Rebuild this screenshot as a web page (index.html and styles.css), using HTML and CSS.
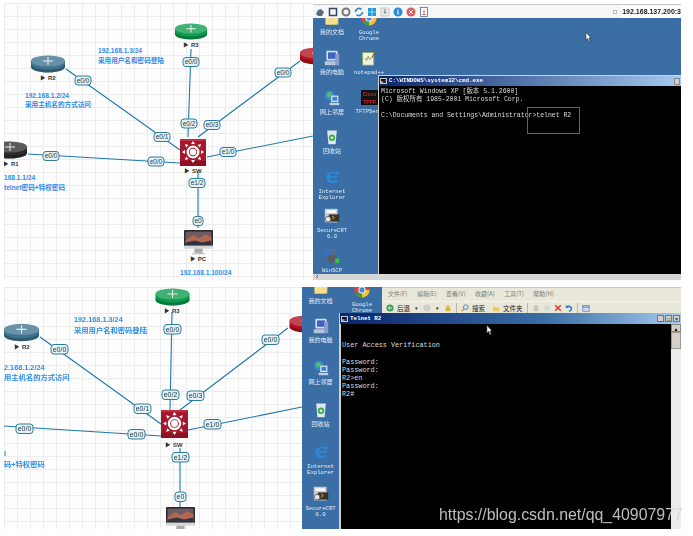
FILE: index.html
```html
<!DOCTYPE html>
<html lang="zh">
<head>
<meta charset="utf-8">
<title>Telnet 实验截图</title>
<link rel="stylesheet" href="styles.css">
</head>
<body>
<svg class="defs" width="0" height="0" aria-hidden="true">
  <defs>
    <symbol id="router" viewBox="0 0 36 18">
      <path d="M1 6v6c0 3 7.500 5.500 17 5.500s17-2.500 17-5.500V6z" fill="currentColor"/>
      <ellipse cx="18" cy="6" rx="17" ry="5.500" fill="currentColor"/>
      <ellipse cx="18" cy="6" rx="17" ry="5.500" fill="#fff" opacity=".22"/>
      <path d="M1 9c0 3 7.500 5.500 17 5.500S35 12 35 9v3c0 3-7.500 5.500-17 5.500S1 15 1 12z" fill="#000" opacity=".22"/>
      <path d="M18 2v8M13 6h10" stroke="#fff" stroke-width="1.100" opacity=".85"/>
    </symbol>
    <symbol id="switch" viewBox="0 0 26 27">
      <rect width="26" height="27" fill="#a3182c"/>
      <rect y="22" width="26" height="5" fill="#8d1023"/>
      <rect width="26" height="2" fill="#c42a3e"/>
      <circle cx="13" cy="13" r="6.500" fill="#fff"/>
      <circle cx="13" cy="13" r="4.200" fill="#a3182c"/>
      <circle cx="13" cy="13" r="3.300" fill="#fff"/>
      <path d="M13 2l2 3h-4zM13 24l2-3h-4zM2 13l3-2v4zM24 13l-3-2v4zM5 5l3.500 1-2.500 2.500zM21 5l-3.500 1 2.500 2.500zM5 21l3.500-1-2.500-2.500zM21 21l-3.500-1 2.500-2.500z" fill="#fff"/>
    </symbol>
    <symbol id="imac" viewBox="0 0 28 24">
      <rect width="28" height="17" rx="1" fill="#2b2b2e"/>
      <rect x="1.500" y="1.500" width="25" height="13" fill="#6e5a62"/>
      <path d="M1.500 10l7-5 6 3 6-4 6 3v7.500h-25z" fill="#b4684e"/>
      <path d="M1.500 12l9-2 7 2 9-2v4.500h-25z" fill="#2e3444"/>
      <rect y="15" width="28" height="3" fill="#d7d7d9"/>
      <rect x="10" y="18" width="8" height="4" fill="#a9a9ac"/>
      <rect x="8" y="22" width="12" height="1.500" fill="#c4c4c6"/>
    </symbol>
    <symbol id="ico-folder" viewBox="0 0 20 18">
      <path d="M2 4h6l2 2h8v11H2z" fill="#e7c65a"/>
      <path d="M2 8h16l-2 9H2z" fill="#f6e08e"/>
    </symbol>
    <symbol id="ico-chrome" viewBox="0 0 20 20">
      <circle cx="10" cy="10" r="9.500" fill="#d8483a"/>
      <path d="M10 10L1.800 14.800A9.500 9.500 0 0 0 10 19.500z" fill="#3c9a4f"/>
      <path d="M10 10v9.500A9.500 9.500 0 0 0 19.500 10z" fill="#f1c232"/>
      <circle cx="10" cy="10" r="4.500" fill="#fff"/>
      <circle cx="10" cy="10" r="3.300" fill="#4a89dc"/>
    </symbol>
    <symbol id="ico-pc" viewBox="0 0 20 20">
      <rect x="3" y="1" width="14" height="12" rx="1" fill="#d8def0"/>
      <rect x="5" y="3" width="10" height="8" fill="#3d63c4"/>
      <rect x="1" y="14" width="15" height="5" fill="#b9c3e0"/>
      <rect x="14" y="5" width="5" height="14" fill="#8f9cc8"/>
    </symbol>
    <symbol id="ico-net" viewBox="0 0 20 20">
      <circle cx="7" cy="7" r="6" fill="#2f8fd0"/>
      <path d="M3 5l5-3 2 4-4 4z" fill="#5bbc5b"/>
      <rect x="9" y="7" width="9" height="8" fill="#d8e6f4"/>
      <rect x="10.500" y="8.500" width="6" height="5" fill="#3d7fd0"/>
      <rect x="7" y="16" width="12" height="3" fill="#c2cfe4"/>
    </symbol>
    <symbol id="ico-bin" viewBox="0 0 20 20">
      <path d="M4 2h12l-1.500 17h-9z" fill="#dfe7ef"/>
      <circle cx="10" cy="11" r="4" fill="#3fae4a"/>
      <path d="M8 11l2-2 2 2-2 2z" fill="#e8f7e8"/>
    </symbol>
    <symbol id="ico-ie" viewBox="0 0 20 20">
      <path d="M17 11H7c0 4 6 5 9 2.500l1 2C12.500 19.500 3 18 3 10.500 3 5 8.500 2 13 4c3-1.500 5.500-2 5.500 0 0 1-.7 2.500-1.800 4C16.500 6 14 5 11 5 9 5 7 6.500 7 8.500h10z" fill="#2a88dc"/>
    </symbol>
    <symbol id="ico-crt" viewBox="0 0 20 20">
      <rect x="1" y="1" width="16" height="17" fill="#c9ccd4"/>
      <rect x="3" y="3" width="12" height="3" fill="#fff"/>
      <rect x="6" y="8" width="13" height="9" fill="#3a3426"/>
      <path d="M10 10l3 2-3 2" stroke="#e8b93a" fill="none"/>
      <circle cx="5" cy="14" r="3.500" fill="#e8e8e8" stroke="#555"/>
    </symbol>
    <symbol id="ico-lock" viewBox="0 0 20 20">
      <rect x="1" y="1" width="6" height="7" fill="#2e6fd8"/>
      <rect x="5" y="9" width="10" height="9" fill="#5c5c62"/>
      <path d="M7 9V6a3 3 0 0 1 6 0v3" stroke="#6a6a70" stroke-width="1.500" fill="none"/>
      <rect x="14" y="13" width="5" height="6" fill="#3dbb4a"/>
    </symbol>
    <symbol id="ico-note" viewBox="0 0 20 20">
      <rect x="2" y="3" width="14" height="16" fill="#f0f2e0" stroke="#8da05a"/>
      <path d="M5 10l2 3 2-5 2 4 2-2" stroke="#6a8a2a" fill="none"/>
      <path d="M13 9l5-8 1 1-5 8z" fill="#8a5a2a"/>
    </symbol>
    <symbol id="cursor" viewBox="0 0 8 12">
      <path d="M1 0v9l2-2 1.500 4 1.500-.6L4.500 6.500H7z" fill="#fff" stroke="#222" stroke-width=".7"/>
    </symbol>
  </defs>
</svg>

<main class="sheet">
  <section class="row row-top">
    <svg class="topo topo-top" viewBox="4 3 309 277">
      <g class="links">
        <path d="M66 69L180 150M28 154L180 163M191 49L188 137M300 61L198 137M207 157L313 136M198 172L198 228"/>
      </g>
      <use href="#router" x="173" y="23" width="36" height="17" class="r-green"/>
      <use href="#router" x="30" y="55" width="36" height="18" class="r-steel"/>
      <use href="#router" x="-8" y="141" width="36" height="18" class="r-black"/>
      <use href="#router" x="299" y="47" width="36" height="18" class="r-red"/>
      <use href="#switch" x="180" y="139" width="26" height="27"/>
      <use href="#imac" x="184" y="230" width="29" height="25"/>
      <g class="node-labels">
        <text x="191" y="47">▶ R3</text>
        <text x="48" y="80">▶ R2</text>
        <text x="11" y="166">▶ R1</text>
        <text x="193" y="173">▶ SW</text>
        <text x="198" y="261">▶ PC</text>
      </g>
      <g class="bubble"><rect x="75" y="76" width="16" height="9"/><text x="83" y="82.800">e0/0</text></g>
      <g class="bubble"><rect x="154" y="132.500" width="16" height="9"/><text x="162" y="139.300">e0/1</text></g>
      <g class="bubble"><rect x="43" y="151.500" width="16" height="9"/><text x="51" y="158.300">e0/0</text></g>
      <g class="bubble"><rect x="148" y="157" width="16" height="9"/><text x="156" y="163.800">e0/0</text></g>
      <g class="bubble"><rect x="183" y="57.500" width="16" height="9"/><text x="191" y="64.300">e0/0</text></g>
      <g class="bubble"><rect x="181" y="119" width="16" height="9"/><text x="189" y="125.800">e0/2</text></g>
      <g class="bubble"><rect x="204" y="120.500" width="16" height="9"/><text x="212" y="127.300">e0/3</text></g>
      <g class="bubble"><rect x="275" y="68" width="16" height="9"/><text x="283" y="74.800">e0/0</text></g>
      <g class="bubble"><rect x="220" y="147.500" width="16" height="9"/><text x="228" y="154.300">e1/0</text></g>
      <g class="bubble"><rect x="189" y="178.500" width="16" height="9"/><text x="197" y="185.300">e1/2</text></g>
      <g class="bubble"><rect x="193" y="216.500" width="10" height="9"/><text x="198" y="223.300">e0</text></g>
      <g class="note">
        <text x="98" y="53">192.168.1.3/24</text>
        <text x="98" y="62.500">采用用户名和密码登陆</text>
        <text x="25" y="98">192.168.1.2/24</text>
        <text x="25" y="107">采用主机名的方式访问</text>
        <text x="4" y="180">168.1.1/24</text>
        <text x="4" y="189.500">telnet密码+特权密码</text>
        <text x="180" y="275">192.168.1.100/24</text>
      </g>
    </svg>

    <div class="vm">
      <div class="vm-bar">
        <div class="tools">
          <svg class="tool" viewBox="0 0 10 10"><path d="M1 7l2-4 3-1 3 3-2 4H3z" fill="#5d6b78"/></svg>
          <svg class="tool" viewBox="0 0 10 10"><rect x="1.500" y="1.500" width="7" height="7" fill="none" stroke="#2a4a70" stroke-width="1.500"/></svg>
          <svg class="tool" viewBox="0 0 10 10"><circle cx="5" cy="5" r="3.500" fill="none" stroke="#777" stroke-width="2"/></svg>
          <svg class="tool" viewBox="0 0 10 10"><path d="M1.500 5a3.500 3.500 0 0 1 6-2.500M8.500 5a3.500 3.500 0 0 1-6 2.500" fill="none" stroke="#2c86c8" stroke-width="1.600"/></svg>
          <svg class="tool" viewBox="0 0 10 10"><path d="M1 1h3.700v3.700H1zM5.300 1H9v3.700H5.300zM1 5.300h3.700V9H1zM5.300 5.300H9V9H5.300z" fill="#1e9be0"/></svg>
          <svg class="tool" viewBox="0 0 10 10"><rect x="1" y="1" width="8" height="8" fill="#eee" stroke="#aaa" stroke-width=".6"/><path d="M5 2v4M3.500 5L5 6.500 6.500 5" stroke="#555" fill="none" stroke-width=".8"/></svg>
          <svg class="tool" viewBox="0 0 10 10"><circle cx="5" cy="5" r="4.500" fill="#2a8ad4"/><rect x="4.400" y="4" width="1.200" height="3.500" fill="#fff"/><rect x="4.400" y="2.300" width="1.200" height="1.100" fill="#fff"/></svg>
          <svg class="tool" viewBox="0 0 10 10"><circle cx="5" cy="5" r="4.500" fill="#e05a60"/><path d="M3 3l4 4M7 3L3 7" stroke="#fff"/></svg>
          <svg class="tool" viewBox="0 0 10 10"><rect x="1.500" y=".5" width="7" height="9" fill="#fff" stroke="#3a5a80" stroke-width=".7"/><path d="M5 3v3M3.500 7.500h3" stroke="#c0392b" stroke-width=".9"/></svg>
        </div>
        <span class="dot"></span>
        <span class="addr">192.168.137.200:3</span>
      </div>
      <div class="desktop">
        <div class="icons icons-top">
          <div class="dicon first"><svg class="dglyph"><use href="#ico-folder"/></svg><span>我的文档</span></div>
          <div class="dicon first"><svg class="dglyph"><use href="#ico-chrome"/></svg><span class="latin">Google Chrome</span></div>
          <div class="dicon"><svg class="dglyph"><use href="#ico-pc"/></svg><span>我的电脑</span></div>
          <div class="dicon"><svg class="dglyph"><use href="#ico-note"/></svg><span class="latin">notepad++</span></div>
          <div class="dicon"><svg class="dglyph"><use href="#ico-net"/></svg><span>网上邻居</span></div>
          <div class="dicon"><div class="tftp"><b>Cisco</b><b>TFTP</b></div><span class="latin nowrap">TFTPServ</span></div>
          <div class="dicon"><svg class="dglyph"><use href="#ico-bin"/></svg><span>回收站</span></div>
          <div></div>
          <div class="dicon"><svg class="dglyph"><use href="#ico-ie"/></svg><span class="latin">Internet Explorer</span></div>
          <div></div>
          <div class="dicon"><svg class="dglyph"><use href="#ico-crt"/></svg><span class="latin">SecureCRT 6.0</span></div>
          <div></div>
          <div class="dicon"><svg class="dglyph"><use href="#ico-lock"/></svg><span class="latin">WinSCP</span></div>
        </div>
        <div class="console console-top">
          <div class="winbar"><span class="winico">C:\</span><span>C:\WINDOWS\system32\cmd.exe</span><span class="winbtn"></span></div>
          <pre class="term term-cmd">Microsoft Windows XP [版本 5.1.2600]
(C) 版权所有 1985-2001 Microsoft Corp.

C:\Documents and Settings\Administrator&gt;telnet R2</pre>
          <div class="redbox"></div>
        </div>
        <svg class="cursor cursor-top"><use href="#cursor"/></svg>
      </div>
      <div class="hscroll"><span>‹</span></div>
    </div>
  </section>

  <section class="row row-bottom">
    <svg class="topo topo-bottom" viewBox="4 287 298 242">
      <g class="links">
        <path d="M40 337L161 424M4 426L161 436M172 312L170 410M288 328L180 410M188 430L302 407M180 448L180 507"/>
      </g>
      <use href="#router" x="154" y="288" width="37" height="18" class="r-green"/>
      <use href="#router" x="3" y="323" width="37" height="19" class="r-steel"/>
      <use href="#router" x="288" y="315" width="37" height="18" class="r-red"/>
      <use href="#switch" x="161" y="410" width="27" height="28"/>
      <use href="#imac" x="166" y="507" width="29" height="25"/>
      <g class="node-labels">
        <text x="172" y="313">▶ R3</text>
        <text x="22" y="349">▶ R2</text>
        <text x="174" y="447">▶ SW</text>
      </g>
      <g class="bubble big"><rect x="51" y="344.500" width="17" height="9.500"/><text x="59.500" y="351.500">e0/0</text></g>
      <g class="bubble big"><rect x="134" y="404" width="17" height="9.500"/><text x="142.500" y="411">e0/1</text></g>
      <g class="bubble big"><rect x="16" y="424" width="17" height="9.500"/><text x="24.500" y="431">e0/0</text></g>
      <g class="bubble big"><rect x="128" y="429.500" width="17" height="9.500"/><text x="136.500" y="436.500">e0/0</text></g>
      <g class="bubble big"><rect x="164" y="324.500" width="17" height="9.500"/><text x="172.500" y="331.500">e0/0</text></g>
      <g class="bubble big"><rect x="162" y="390" width="17" height="9.500"/><text x="170.500" y="397">e0/2</text></g>
      <g class="bubble big"><rect x="187" y="391" width="17" height="9.500"/><text x="195.500" y="398">e0/3</text></g>
      <g class="bubble big"><rect x="262" y="335" width="17" height="9.500"/><text x="270.500" y="342">e0/0</text></g>
      <g class="bubble big"><rect x="204" y="419.500" width="17" height="9.500"/><text x="212.500" y="426.500">e1/0</text></g>
      <g class="bubble big"><rect x="172" y="452.500" width="17" height="9.500"/><text x="180.500" y="459.500">e1/2</text></g>
      <g class="bubble big"><rect x="175" y="492" width="11" height="9.500"/><text x="180.500" y="499">e0</text></g>
      <g class="note note-big">
        <text x="74" y="322">192.168.1.3/24</text>
        <text x="74" y="332.500">采用用户名和密码登陆</text>
        <text x="4" y="370">2.168.1.2/24</text>
        <text x="4" y="379.500">用主机名的方式访问</text>
        <text x="4" y="456">I</text>
        <text x="4" y="466.500">码+特权密码</text>
      </g>
    </svg>

    <div class="vm2">
      <div class="desktop desktop-side">
        <div class="icons icons-bottom">
          <div class="dicon first"><svg class="dglyph"><use href="#ico-folder"/></svg><span>我的文档</span></div>
          <div class="dicon"><svg class="dglyph"><use href="#ico-pc"/></svg><span>我的电脑</span></div>
          <div class="dicon"><svg class="dglyph"><use href="#ico-net"/></svg><span>网上邻居</span></div>
          <div class="dicon"><svg class="dglyph"><use href="#ico-bin"/></svg><span>回收站</span></div>
          <div class="dicon"><svg class="dglyph"><use href="#ico-ie"/></svg><span class="latin">Internet Explorer</span></div>
          <div class="dicon"><svg class="dglyph"><use href="#ico-crt"/></svg><span class="latin">SecureCRT 6.0</span></div>
        </div>
        <div class="dicon first chrome-b"><svg class="dglyph"><use href="#ico-chrome"/></svg><span class="latin">Google Chrome</span></div>
      </div>
      <div class="explorer">
        <div class="menu"><span>文件(F)</span><span>编辑(E)</span><span>查看(V)</span><span>收藏(A)</span><span>工具(T)</span><span>帮助(H)</span></div>
        <div class="xp-tools">
          <svg class="xp" viewBox="0 0 10 10"><circle cx="5" cy="5" r="4.500" fill="#3aa655"/><path d="M7.500 5h-4M5 3L3 5l2 2" stroke="#fff" fill="none"/></svg><span>后退</span>
          <span class="caret">▾</span>
          <svg class="xp" viewBox="0 0 10 10"><circle cx="5" cy="5" r="4.500" fill="#cfcfc8"/></svg>
          <span class="caret">▾</span>
          <svg class="xp" viewBox="0 0 10 10"><path d="M2 9V5h6v4zM5 1l3 4H2z" fill="#d9b53a"/></svg>
          <i class="sep"></i>
          <svg class="xp" viewBox="0 0 10 10"><circle cx="6" cy="4" r="3" fill="#cfe0f5" stroke="#4a78b0"/><path d="M4 6L1 9" stroke="#b08a3a" stroke-width="1.500"/></svg><span>搜索</span>
          <svg class="xp xp-gap" viewBox="0 0 10 10"><path d="M1 3h3l1 1h4v5H1z" fill="#f0cc60"/></svg><span>文件夹</span>
          <i class="sep"></i>
          <svg class="xp" viewBox="0 0 10 10"><rect x="2" y="2" width="6" height="7" fill="#c8c8c2"/></svg>
          <svg class="xp" viewBox="0 0 10 10"><circle cx="5" cy="5" r="3.500" fill="#d8d8d2"/></svg>
          <svg class="xp" viewBox="0 0 10 10"><path d="M1.500 1.500l7 7M8.500 1.500l-7 7" stroke="#d8382a" stroke-width="1.800"/></svg>
          <svg class="xp" viewBox="0 0 10 10"><path d="M2 4a3.500 3.500 0 0 1 6 1 3.500 3.500 0 0 1-3 4" stroke="#2a78d0" stroke-width="1.800" fill="none"/><path d="M1 1v4h4z" fill="#2a78d0"/></svg>
          <i class="sep"></i>
          <svg class="xp" viewBox="0 0 10 10"><rect x="1" y="2" width="8" height="7" fill="#cfe0f5" stroke="#3a68b0" stroke-width=".8"/><path d="M1 4h8" stroke="#3a68b0"/></svg>
        </div>
      </div>
      <div class="console console-bottom">
        <div class="winbar winbar-telnet"><span class="winico">C:\</span><span>Telnet R2</span><span class="winbtns"><i>_</i><i>□</i><i>×</i></span></div>
        <div class="telnet-body">
          <pre class="term term-telnet">

User Access Verification

Password:
Password:
R2&gt;en
Password:
R2#</pre>
          <div class="vscroll"><i class="arrow">▲</i><i class="thumb"></i></div>
        </div>
        <svg class="cursor cursor-bottom"><use href="#cursor"/></svg>
      </div>
    </div>
  </section>
</main>
<div class="watermark">https://blog.csdn.net/qq_40907977</div>
</body>
</html>
```

FILE: styles.css
```css
* { box-sizing: border-box; }
html, body { margin: 0; padding: 0; background: #fff; }
body {
  width: 693px;
  height: 536px;
  overflow: hidden;
  position: relative;
  font-family: "Noto Sans CJK SC", "Liberation Sans", sans-serif;
}
.defs { position: absolute; }

.sheet {
  display: flex;
  flex-direction: column;
  gap: 7px;
  padding: 3px 12px 0 4px;
  filter: blur(.5px);
}
.row { display: flex; }
.row-top { height: 277px; }
.row-bottom { height: 242px; }

/* topology canvas */
.topo {
  display: block;
  flex: none;
  background-color: #fdfdfd;
  background-image:
    linear-gradient(#ececec 1px, transparent 1px),
    linear-gradient(90deg, #ececec 1px, transparent 1px);
  background-size: 13px 13px;
}
.topo-top { width: 309px; height: 277px; }
.topo-bottom { width: 298px; height: 242px; }
.links path { fill: none; stroke: #1f78ab; stroke-width: 1.100; }
.r-green { color: #0c9a4c; }
.r-steel { color: #3f7390; }
.r-black { color: #2c2c2c; }
.r-red { color: #b30f1f; }
.node-labels text {
  font: bold 6px "Liberation Sans", sans-serif;
  fill: #333;
  text-anchor: middle;
}
.bubble rect { fill: #e4f2f7; stroke: #2d7c9c; stroke-width: 1; rx: 3px; }
.bubble text {
  font: 6.500px "Liberation Sans", sans-serif;
  fill: #243a48;
  text-anchor: middle;
}
.bubble.big text { font-size: 7px; }
.note text {
  font: bold 6.600px "Liberation Sans", "Noto Sans CJK SC", sans-serif;
  fill: #2d8eea;
}
.note-big text { font-size: 7.300px; }

/* top remote session */
.vm {
  flex: 1;
  min-width: 0;
  display: flex;
  flex-direction: column;
}
.vm-bar {
  height: 15px;
  flex: none;
  display: flex;
  align-items: center;
  padding-top: 3px;
  background: linear-gradient(#fff 1px, #c8c8c8 1px, #c8c8c8 2px, #f6f6f6 2px);
}
.tools { display: flex; align-items: center; gap: 3px; padding-left: 2px; width: 300px; }
.tool { width: 10px; height: 10px; flex: none; }
.dot { width: 4px; height: 4px; border: 1px solid #bbb; margin-left: 1px; }
.addr {
  margin-left: 4px;
  flex: 1;
  height: 12px;
  background: #fff;
  font: bold 7px/12px "Liberation Sans", sans-serif;
  color: #1a1a1a;
  white-space: nowrap;
  padding-left: 1px;
}
.desktop { position: relative; flex: 1; background: #3a6ea5; overflow: hidden; }
.hscroll {
  height: 6px;
  flex: none;
  background: #d6d6d6;
  font: 7px/6px "Liberation Sans", sans-serif;
  color: #333;
  padding-left: 3px;
}
.icons { display: grid; }
.icons-top {
  grid-template-columns: 36px 38px;
  grid-template-rows: 18px repeat(6, 39.500px);
  padding-left: 1px;
}
.icons-bottom {
  grid-template-columns: 37px;
  grid-template-rows: 14px repeat(5, 42px);
}
.dicon {
  display: flex;
  flex-direction: column;
  align-items: center;
  color: #e6eef7;
  font-size: 6px;
  line-height: 6.500px;
  text-align: center;
  padding-top: 14px;
}
.icons-bottom .dicon { padding-top: 17px; }
.dicon.first, .icons-bottom .dicon.first { margin-top: -8px; padding-top: 0; }
.dicon span { margin-top: 3px; }
.dicon .latin {
  font-family: "Liberation Mono", monospace;
  font-size: 5.600px;
  line-height: 6px;
  width: 36px;
  margin-top: 4px;
}
.dicon .nowrap { white-space: nowrap; }
.dglyph { width: 16px; height: 16px; flex: none; }
.tftp {
  width: 17px;
  height: 16px;
  background: #111;
  color: #d8222a;
  font: bold 5px/8px "Liberation Sans", sans-serif;
  display: flex;
  flex-direction: column;
  align-self: flex-start;
  margin-left: 11px;
  overflow: hidden;
}
.console { background: #000; position: absolute; display: flex; flex-direction: column; }
.console-top {
  left: 65px;
  top: 57px;
  right: 0;
  bottom: 0;
  border-left: 1px solid #d4d0c8;
  border-top: 1px solid #d4d0c8;
}
.winbar {
  height: 10px;
  flex: none;
  display: flex;
  align-items: center;
  gap: 2px;
  padding: 0 1px;
  background: linear-gradient(90deg, #0a246a, #a6caf0);
  color: #fff;
  font: bold 5.800px/10px "Liberation Mono", monospace;
}
.winico {
  font-size: 3.500px;
  width: 7px;
  height: 6px;
  line-height: 6px;
  background: #111;
  border: .5px solid #ccc;
  overflow: hidden;
}
.winbtn { margin-left: auto; width: 6px; height: 7px; background: #d4d0c8; border: 1px solid #888; }
.term {
  margin: 0;
  color: #dcdcdc;
  white-space: pre;
  font-family: "Liberation Mono", "Noto Sans CJK SC", monospace;
}
.term-cmd { font-size: 6.480px; line-height: 8px; padding: 2px 0 0 2px; }
.redbox {
  position: absolute;
  left: 148px;
  top: 31px;
  width: 53px;
  height: 27px;
  border: 1px solid #c23a3a;
}
.cursor { position: absolute; width: 7px; height: 11px; }
.cursor-top { left: 272px; top: 14px; }

/* bottom remote session */
.vm2 {
  flex: 1;
  min-width: 0;
  position: relative;
  display: flex;
  flex-direction: column;
  padding-left: 80px;
  background: #3a6ea5;
}
.vm2 .desktop-side { position: absolute; left: 0; top: 0; width: 80px; height: 100%; }
.chrome-b { position: absolute; left: 42px; top: 3px; width: 36px; }
.explorer {
  height: 26px;
  flex: none;
  background: #e9e7da;
  border-top: 1px solid #c8c8c8;
}
.menu {
  height: 13px;
  display: flex;
  gap: 9.500px;
  padding: 2px 0 0 6px;
  font-size: 6px;
  line-height: 8px;
  color: #7d7d78;
}
.xp-tools {
  height: 12px;
  display: flex;
  align-items: center;
  gap: 3px;
  padding-left: 4px;
  font-size: 6.500px;
  line-height: 8px;
  color: #222;
  border-top: 1px solid #f6f4ea;
}
.xp { width: 8px; height: 8px; flex: none; }
.xp-gap { margin-left: 4px; }
.caret { font-size: 5px; margin: 0 2px; }
.sep { width: 1px; height: 10px; background: #bdb9a8; margin: 0 1px; }
.console-bottom {
  position: relative;
  flex: 1;
  margin-left: -43px;
  background: #d4d0c8;
  padding: 0 0 0 2px;
  min-height: 0;
}
.winbar-telnet {
  background: linear-gradient(90deg, #0a246a 0%, #3a6ea5 60%, #a6caf0 100%);
  height: 11px;
  margin-left: -1px;
}
.winbtns { margin-left: auto; display: flex; gap: 1px; }
.winbtns i {
  width: 7px;
  height: 7px;
  background: #d4d0c8;
  color: #111;
  font: bold 5px/7px "Liberation Sans", sans-serif;
  text-align: center;
  border: .5px solid #777;
}
.telnet-body { flex: 1; display: flex; min-height: 0; }
.term-telnet {
  flex: 1;
  min-width: 0;
  background: #000;
  font-size: 6.800px;
  line-height: 8.200px;
  padding: 9px 0 0 1px;
  overflow: hidden;
}
.vscroll {
  width: 10px;
  flex: none;
  background: #ececea;
  display: flex;
  flex-direction: column;
}
.arrow {
  height: 8px;
  background: #d4d0c8;
  border: .5px solid #888;
  font: 5px/8px "Liberation Sans", sans-serif;
  text-align: center;
  color: #111;
}
.thumb { height: 17px; background: #d4d0c8; border: .5px solid #999; }
.cursor-bottom { left: 147px; top: 12px; }

.watermark {
  position: absolute;
  left: 439px;
  top: 505px;
  font: 15.900px/20px "Liberation Sans", sans-serif;
  color: rgba(215, 215, 215, .88);
  white-space: nowrap;
}
```
